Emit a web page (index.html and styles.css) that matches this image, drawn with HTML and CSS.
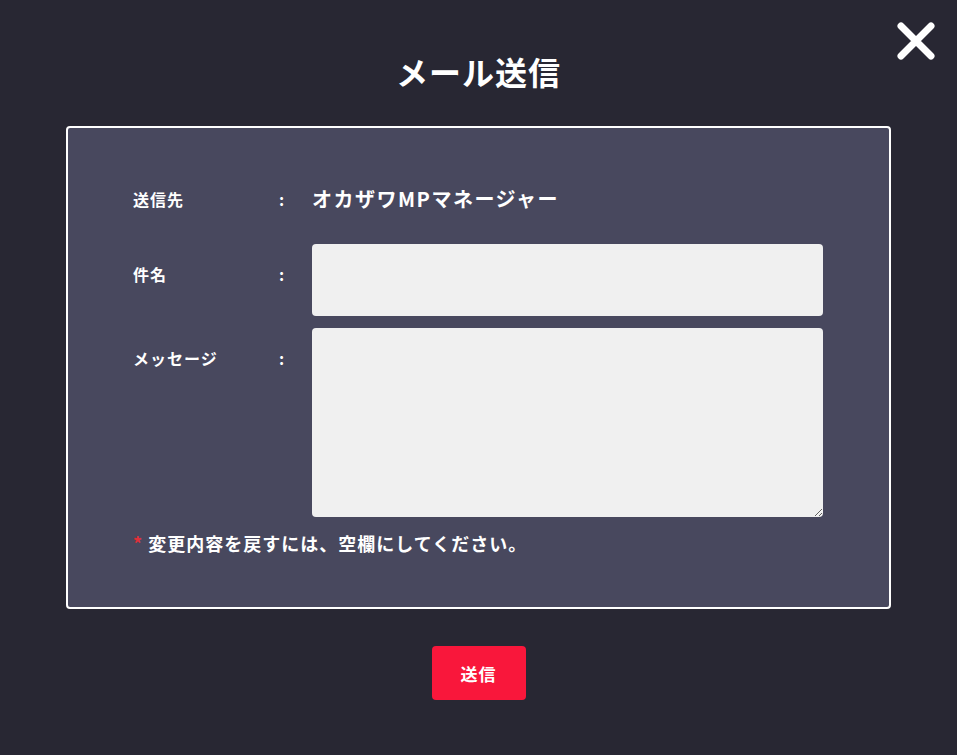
FILE: index.html
```html
<!DOCTYPE html>
<html lang="ja">
<head>
<meta charset="utf-8">
<title>メール送信</title>
<link rel="stylesheet" href="styles.css">
</head>
<body>
<div class="page">
  <button class="close" aria-label="閉じる">
    <svg width="38" height="38" viewBox="0 0 38 38"><path d="M4 4 L34 34 M34 4 L4 34" stroke="#fff" stroke-width="7" stroke-linecap="round"/></svg>
  </button>
  <h1 class="title">メール送信</h1>
  <div class="card">
    <div class="row row-to">
      <span class="label">送信先</span>
      <span class="colon">:</span>
      <span class="value">オカザワMPマネージャー</span>
    </div>
    <div class="row">
      <span class="label">件名</span>
      <span class="colon">:</span>
      <input class="field" type="text">
    </div>
    <div class="row">
      <span class="label">メッセージ</span>
      <span class="colon">:</span>
      <textarea class="field area"></textarea>
    </div>
    <p class="note"><span class="star">*</span> 変更内容を戻すには、空欄にしてください。</p>
  </div>
  <div class="actions"><button class="send">送信</button></div>
</div>
</body>
</html>
```
FILE: styles.css
```css
html, body {
  margin: 0;
  padding: 0;
  background: #282733;
  height: 100%;
}
.page {
  position: relative;
  font-family: "Noto Sans CJK JP", "Noto Sans", sans-serif;
  color: #fff;
  padding: 49px 66px 0;
}
.close {
  position: absolute;
  top: 22px;
  right: 22px;
  width: 38px;
  height: 38px;
  padding: 0;
  border: 0;
  background: none;
  cursor: pointer;
}
.close svg { display: block; }
.title {
  margin: 0 0 33px;
  text-align: center;
  font-size: 32px;
  font-weight: 700;
  line-height: 44px;
  letter-spacing: 1px;
}
.card {
  border: 2px solid #fff;
  border-radius: 4px;
  background: #48485e;
  padding: 57px 66px 50px 65px;
  display: flex;
  flex-direction: column;
  gap: 12px;
}
.row {
  display: grid;
  grid-template-columns: 146px 33px 1fr;
  align-items: start;
}
.row-to {
  align-items: center;
  margin-bottom: 19px;
}
.label {
  font-size: 16px;
  font-weight: 700;
  line-height: 22px;
  padding-top: 19px;
  letter-spacing: 1px;
}
.row .colon {
  font-size: 16px;
  font-weight: 700;
  line-height: 22px;
  padding-top: 19px;
}
.row-to .label, .row-to .colon { padding-top: 0; }
.value {
  font-size: 20px;
  font-weight: 700;
  line-height: 28px;
  letter-spacing: 1.5px;
}
.field {
  display: block;
  box-sizing: border-box;
  width: 100%;
  height: 72px;
  border: 0;
  border-radius: 4px;
  background: #f0f0f0;
  margin: 0;
  font: 16px "Noto Sans CJK JP", sans-serif;
}
.area {
  height: 189px;
  resize: vertical;
}
.note {
  margin: 0;
  font-size: 18px;
  font-weight: 700;
  line-height: 28px;
  letter-spacing: 1px;
}
.star { color: #e0303a; }
.actions {
  display: flex;
  justify-content: center;
  padding-top: 37px;
}
.send {
  width: 94px;
  height: 54px;
  border: 0;
  border-radius: 4px;
  background: #f9173b;
  color: #fff;
  font-family: "Noto Sans CJK JP", sans-serif;
  font-size: 17px;
  font-weight: 700;
  letter-spacing: 1px;
}
```
